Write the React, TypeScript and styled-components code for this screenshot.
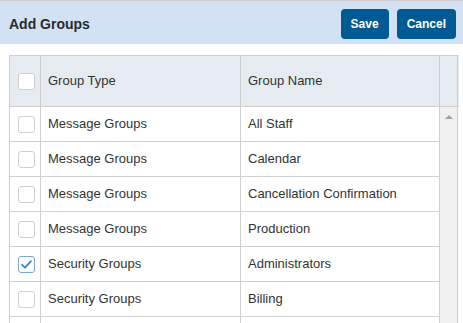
import styled, { createGlobalStyle } from 'styled-components';

const GlobalStyle = createGlobalStyle`
  html, body {
    margin: 0;
    padding: 0;
    background: #ffffff;
    font-family: 'Liberation Sans', Arial, sans-serif;
    overflow: hidden;
  }
`;

type Group = { type: string; name: string; checked?: boolean };

const groups: Group[] = [
  { type: 'Message Groups', name: 'All Staff' },
  { type: 'Message Groups', name: 'Calendar' },
  { type: 'Message Groups', name: 'Cancellation Confirmation' },
  { type: 'Message Groups', name: 'Production' },
  { type: 'Security Groups', name: 'Administrators', checked: true },
  { type: 'Security Groups', name: 'Billing' },
];

const Check = ({ checked }: { checked?: boolean }) => (
  <Box $checked={checked}>
    {checked && (
      <svg width='13' height='13' viewBox='0 0 13 13'>
        <path
          d='M2 6.8 L5 9.6 L11 3.2'
          fill='none'
          stroke='#3d7fd0'
          strokeWidth='1.8'
          strokeLinecap='round'
          strokeLinejoin='round'
        />
      </svg>
    )}
  </Box>
);

const App = () => {
  return (
    <>
      <GlobalStyle />
      <Page>
        <TitleBar>
          <Title>Add Groups</Title>
          <Actions>
            <ActionButton>Save</ActionButton>
            <ActionButton>Cancel</ActionButton>
          </Actions>
        </TitleBar>
        <Table>
          <HeadRow>
            <CheckCell>
              <Check />
            </CheckCell>
            <Cell>Group Type</Cell>
            <Cell>Group Name</Cell>
            <ScrollHead />
          </HeadRow>
          <Body>
            <Rows>
              {groups.map((g) => (
                <Row key={g.name}>
                  <CheckCell>
                    <Check checked={g.checked} />
                  </CheckCell>
                  <Cell>{g.type}</Cell>
                  <Cell>{g.name}</Cell>
                </Row>
              ))}
              <Row>
                <CheckCell />
                <Cell />
                <Cell />
              </Row>
            </Rows>
            <ScrollTrack>
              <UpArrow />
            </ScrollTrack>
          </Body>
        </Table>
      </Page>
    </>
  );
};

export default App;

const Page = styled.div`
  width: 463px;
  height: 323px;
  overflow: hidden;
  border-top: 1px solid #cccccc;
  box-sizing: border-box;
`;

const TitleBar = styled.div`
  height: 43px;
  background: #d2e2f4;
  display: flex;
  align-items: center;
  justify-content: space-between;
  padding: 0 7px 0 9px;
`;

const Title = styled.h1`
  margin: 0;
  padding-top: 2px;
  font: bold 14px 'Liberation Sans', Arial, sans-serif;
  color: #2b2b2b;
`;

const Actions = styled.div`
  display: flex;
  gap: 8px;
  margin-top: 3px;
`;

const ActionButton = styled.button`
  height: 30px;
  padding: 0 10px;
  border: none;
  border-radius: 4px;
  background: #005a94;
  color: #ffffff;
  font: bold 12px 'Liberation Sans', Arial, sans-serif;
  cursor: pointer;
`;

const Table = styled.div`
  margin: 11px 0 0 9px;
  width: 449px;
  border: 1px solid #d0d0d0;
  border-right: none;
  font: 13px 'Liberation Sans', Arial, sans-serif;
  color: #333333;
`;

const HeadRow = styled.div`
  display: grid;
  grid-template-columns: 30px 200px 199px 19px;
  height: 50px;
  background: #e6ebf2;
  border-bottom: 1px solid #d0d0d0;
`;

const Body = styled.div`
  display: grid;
  grid-template-columns: 429px 19px;
`;

const Rows = styled.div`
  display: flex;
  flex-direction: column;
`;

const Row = styled.div`
  display: grid;
  grid-template-columns: 30px 200px 199px;
  height: 34px;
  border-bottom: 1px solid #d0d0d0;
  background: #ffffff;
`;

const Cell = styled.div`
  display: flex;
  align-items: center;
  padding: 0 0 1px 7px;
  border-left: 1px solid #d0d0d0;
  white-space: nowrap;
`;

const CheckCell = styled.div`
  display: flex;
  align-items: center;
  justify-content: center;
  padding-left: 2px;
`;

const Box = styled.span<{ $checked?: boolean }>`
  width: 15px;
  height: 15px;
  border: 1px solid ${(p) => (p.$checked ? '#7aa6dd' : '#cfcfcf')};
  border-radius: 3px;
  background: #ffffff;
  display: flex;
  align-items: center;
  justify-content: center;
`;

const ScrollHead = styled.div`
  border-left: 1px solid #d0d0d0;
  border-right: 1px solid #d0d0d0;
`;

const ScrollTrack = styled.div`
  background: #f0f0f0;
  border-left: 1px solid #d0d0d0;
  border-right: 1px solid #d0d0d0;
  display: flex;
  justify-content: center;
  padding-top: 8px;
`;

const UpArrow = styled.span`
  width: 0;
  height: 0;
  border-left: 4px solid transparent;
  border-right: 4px solid transparent;
  border-bottom: 4px solid #a3a3a3;
`;
